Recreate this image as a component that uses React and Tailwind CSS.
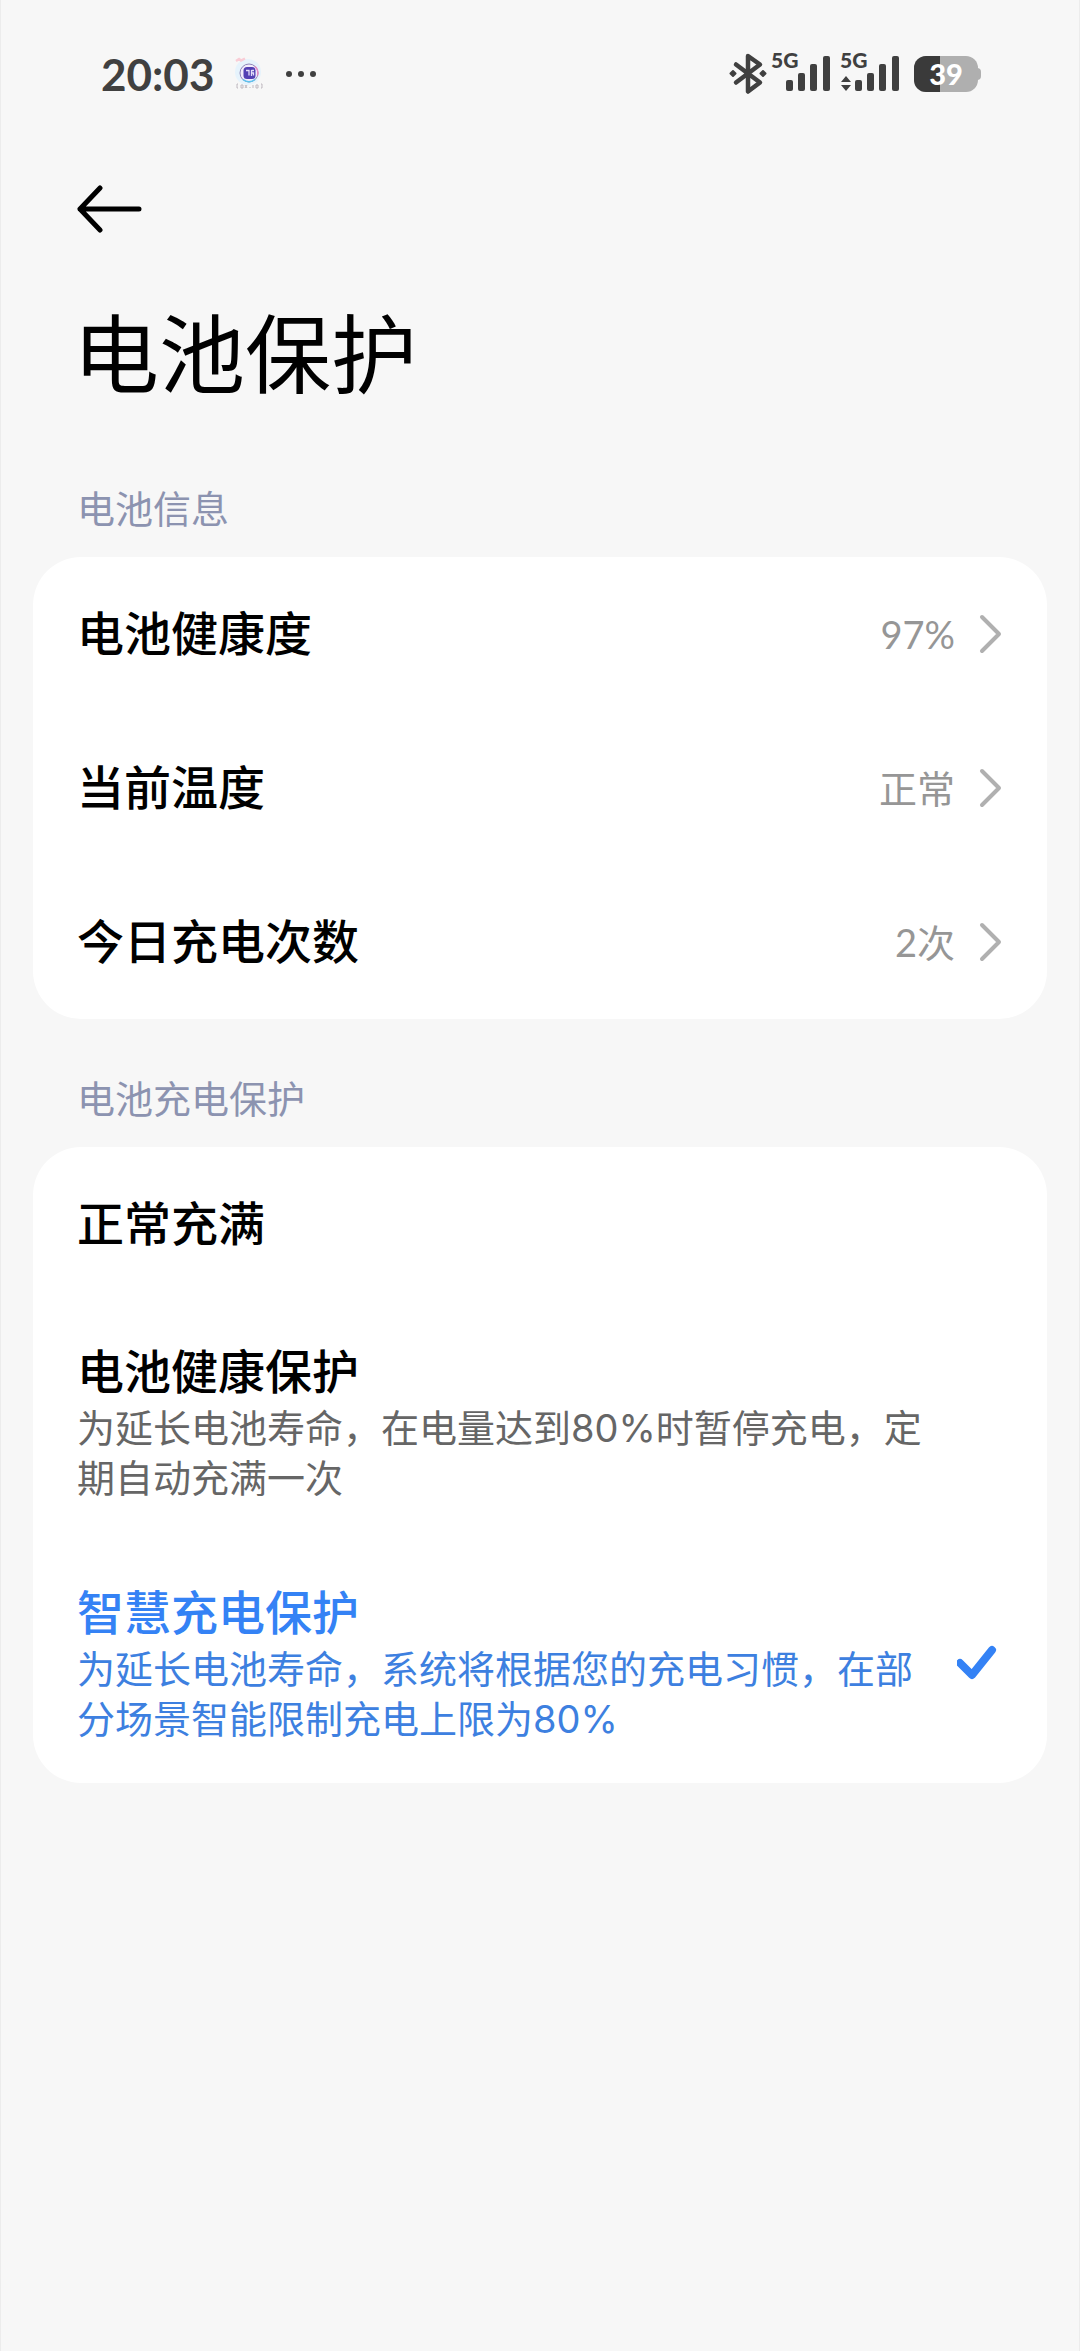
import { useState } from 'react';

const INFO_ROWS = [
  { label: '电池健康度', value: '97%' },
  { label: '当前温度', value: '正常' },
  { label: '今日充电次数', value: '2次' },
];

const MODES = [
  { id: 'normal', title: '正常充满' },
  {
    id: 'health',
    title: '电池健康保护',
    desc: '为延长电池寿命，在电量达到80%时暂停充电，定期自动充满一次',
  },
  {
    id: 'smart',
    title: '智慧充电保护',
    desc: '为延长电池寿命，系统将根据您的充电习惯，在部分场景智能限制充电上限为80%',
  },
];

function AppBadge() {
  return (
    <svg width="32" height="36" viewBox="0 0 32 36" aria-hidden="true">
      <circle cx="14" cy="16" r="13" fill="#e6f3fc" />
      <path d="M2 5l3-2 2 1.5 4-2" stroke="#f9cdd6" strokeWidth="2.5" fill="none" />
      <circle cx="15" cy="17" r="9" fill="#f1ecfb" stroke="#8f86b8" strokeWidth="1" />
      <path d="M9 23.5a9 9 0 0 0 12 0" stroke="#5cc4ee" strokeWidth="1.5" fill="none" />
      <path d="M21 10.5a9 9 0 0 1 2.5 9" stroke="#e58ac4" strokeWidth="1.5" fill="none" />
      <rect x="9.5" y="11" width="12" height="12" rx="3.5" fill="#5340b4" />
      <path d="M12 14.5h3v5M17.5 14v6M17.5 14.5h2.5M17.5 17h2v2.5" stroke="#e3def8" strokeWidth="1.3" fill="none" />
      <path
        d="M4 28H3v4h1M7 29v3h2v-3zM11 29l2 3M13 29l-2 3M16 31v1M19 29v3M22 29v3h2v-3zM27 28h1v4h-1"
        stroke="#bfb9c0"
        strokeWidth="1"
        fill="none"
      />
    </svg>
  );
}

function BluetoothIcon() {
  return (
    <svg width="38" height="42" viewBox="0 0 38 42" fill="none" aria-hidden="true">
      <path
        d="M7 11.5L31 29.5L19 38.5V3L31 11.5L7 29.5"
        stroke="#404040"
        strokeWidth="4.5"
        strokeLinecap="round"
        strokeLinejoin="round"
      />
      <path
        d="M4 18l2.5 2.5L4 23l-2.5-2.5zM34 18l2.5 2.5L34 23l-2.5-2.5z"
        fill="#404040"
        stroke="#404040"
        strokeWidth="2"
        strokeLinejoin="round"
      />
    </svg>
  );
}

function SignalIcon({ transfer }) {
  return (
    <svg width="60" height="52" viewBox="0 0 60 52" fill="#404040" aria-hidden="true">
      <text x="0" y="20" fontSize="21" fontWeight="900" fontFamily="Lato, sans-serif">
        5G
      </text>
      {transfer && <path d="M1 34l5-6 5 6zM1 37h10l-5 6z" />}
      <rect x="15" y="32" width="7" height="11" rx="2" />
      <rect x="27" y="25" width="7" height="18" rx="2" />
      <rect x="39" y="16" width="7" height="27" rx="2" />
      <rect x="52" y="8" width="7" height="35" rx="2" />
    </svg>
  );
}

function BatteryIcon() {
  return (
    <svg width="68" height="36" viewBox="0 0 68 36" aria-hidden="true">
      <path d="M60 12h3a4 4 0 0 1 4 4v4a4 4 0 0 1-4 4h-3z" fill="#afafaf" />
      <rect width="64" height="36" rx="12" fill="#afafaf" />
      <path d="M26 0H12A12 12 0 0 0 0 12v12a12 12 0 0 0 12 12h14z" fill="#3a3a3a" />
      <text x="32" y="29" textAnchor="middle" fill="#fff" fontSize="29" fontWeight="900" fontFamily="Lato, sans-serif">
        39
      </text>
    </svg>
  );
}

function StatusBar() {
  return (
    <div className="flex h-[147px] items-center justify-between pr-[97px] pl-[100px]">
      <div className="flex items-center">
        <span className="font-[Lato,sans-serif] text-[44px] leading-none font-bold text-[#404040]">20:03</span>
        <span className="ml-5">
          <AppBadge />
        </span>
        <span className="ml-5 flex gap-[6px]">
          <i className="size-[6px] rounded-full bg-[#404040]" />
          <i className="size-[6px] rounded-full bg-[#404040]" />
          <i className="size-[6px] rounded-full bg-[#404040]" />
        </span>
      </div>
      <div className="flex items-center">
        <BluetoothIcon />
        <span className="ml-1">
          <SignalIcon />
        </span>
        <span className="ml-[9px]">
          <SignalIcon transfer />
        </span>
        <span className="ml-[14px]">
          <BatteryIcon />
        </span>
      </div>
    </div>
  );
}

function InfoRow({ label, value }) {
  return (
    <li>
      <button type="button" className="flex h-[154px] w-full items-center px-[44px] text-left">
        <span className="flex-1 text-[47px] font-medium text-black">{label}</span>
        <span className="font-[Lato,'Noto_Sans_CJK_SC',sans-serif] text-[38px] text-[#969696]">{value}</span>
        <svg className="ml-6" width="24" height="42" viewBox="0 0 24 42" fill="none" aria-hidden="true">
          <path d="M3 4l17 17L3 38" stroke="#b0b0b0" strokeWidth="4" strokeLinecap="round" strokeLinejoin="round" />
        </svg>
      </button>
    </li>
  );
}

function ModeOption({ mode, checked, onSelect }) {
  return (
    <label className={`flex items-center gap-6 px-[44px] py-[39px] ${checked ? 'text-[#3482f5]' : 'text-black'}`}>
      <input
        type="radio"
        name="charge-mode"
        value={mode.id}
        checked={checked}
        onChange={() => onSelect(mode.id)}
        className="sr-only"
      />
      <span className="flex-1">
        <span className={`block text-[47px] font-medium ${mode.desc ? 'leading-[63px]' : 'leading-[76px]'}`}>
          {mode.title}
        </span>
        {mode.desc && (
          <span className={`block text-[38px] leading-[50px] ${checked ? 'text-[#3d80e0]' : 'text-[#666666]'}`}>
            {mode.desc}
          </span>
        )}
      </span>
      {/* keeps its width when hidden so every description wraps alike */}
      <svg
        className={checked ? 'visible' : 'invisible'}
        width="46"
        height="40"
        viewBox="0 0 46 40"
        fill="none"
        aria-hidden="true"
      >
        <path d="M3 20L15 32L35 7" stroke="#3482f5" strokeWidth="8" strokeLinecap="round" strokeLinejoin="round" />
      </svg>
    </label>
  );
}

function SectionTitle({ children }) {
  return <h2 className="px-[76px] text-[38px] leading-[56px] text-[#8c93b0]">{children}</h2>;
}

export default function App() {
  const [mode, setMode] = useState('smart');

  return (
    <div className="min-h-screen border-x border-[#ececec] bg-[#f7f7f7] font-[Inter,'Noto_Sans_CJK_SC',sans-serif]">
      <StatusBar />
      <main>
        <button type="button" aria-label="返回" className="ml-[76px] block py-[37px]">
          <svg width="66" height="50" viewBox="0 0 66 50" fill="none" aria-hidden="true">
            <path d="M23 4L3 25L23 46M3 25H62" stroke="#000" strokeWidth="5" strokeLinecap="round" strokeLinejoin="round" />
          </svg>
        </button>
        <h1 className="mt-5 px-[72px] text-[86px] leading-[130px] text-black">电池保护</h1>

        <section className="mt-[60px]">
          <SectionTitle>电池信息</SectionTitle>
          <ul className="mx-8 mt-5 rounded-[48px] bg-white">
            {INFO_ROWS.map((row) => (
              <InfoRow key={row.label} {...row} />
            ))}
          </ul>
        </section>

        <section className="mt-[52px]">
          <SectionTitle>电池充电保护</SectionTitle>
          <div role="radiogroup" aria-label="电池充电保护" className="mx-8 mt-5 rounded-[48px] bg-white">
            {MODES.map((item) => (
              <ModeOption key={item.id} mode={item} checked={item.id === mode} onSelect={setMode} />
            ))}
          </div>
        </section>
      </main>
    </div>
  );
}
